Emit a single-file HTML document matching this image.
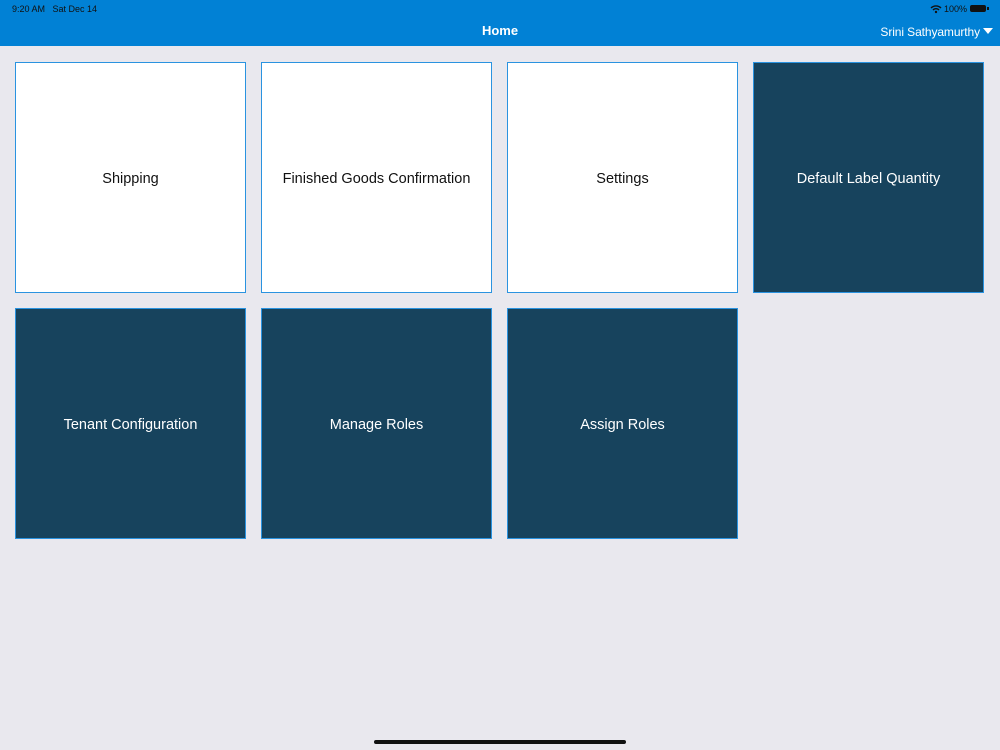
<!DOCTYPE html>
<html><head><style>
body{margin:0;width:1000px;height:750px;background:#e9e8ee;font-family:"Liberation Sans",sans-serif;position:relative;overflow:hidden}
.hdr{position:absolute;left:0;top:0;width:1000px;height:46px;background:#0181d5}
.t{position:absolute;font-size:9px;color:#111}
.tile{position:absolute;width:229px;height:227px;padding-top:2px;border:1px solid #2a93e0;display:flex;align-items:center;justify-content:center;font-size:14.5px;box-sizing:content-box}
.w{background:#fff;color:#111}
.d{background:#17435d;color:#fff}
</style></head><body>
<div class="hdr">
<div class="t" style="left:12px;top:4px">9:20 AM&nbsp;&nbsp;&nbsp;Sat Dec 14</div>
<svg style="position:absolute;left:930px;top:4px" width="12" height="10" viewBox="0 0 12 10"><path d="M1 4a7 7 0 0 1 10 0M3 6a4 4 0 0 1 6 0" stroke="#111" stroke-width="1.4" fill="none"/><circle cx="6" cy="8" r="1.2" fill="#111"/></svg>
<div class="t" style="left:944px;top:4px">100%</div>
<div style="position:absolute;left:970px;top:5px;width:16px;height:7px;background:#111;border-radius:2px"></div>
<div style="position:absolute;left:987px;top:7px;width:1.5px;height:3px;background:#111"></div>
<div style="position:absolute;left:0;width:1000px;top:23px;text-align:center;color:#fff;font-size:13px;font-weight:bold">Home</div>
<div style="position:absolute;right:20px;top:25px;color:#fff;font-size:12px;letter-spacing:-0.1px">Srini Sathyamurthy</div>
<div style="position:absolute;left:983px;top:28px;width:0;height:0;border-left:5px solid transparent;border-right:5px solid transparent;border-top:6px solid #fff"></div>
</div>
<div class="tile w" style="left:15px;top:62px">Shipping</div>
<div class="tile w" style="left:261px;top:62px">Finished Goods Confirmation</div>
<div class="tile w" style="left:507px;top:62px">Settings</div>
<div class="tile d" style="left:753px;top:62px">Default Label Quantity</div>
<div class="tile d" style="left:15px;top:308px">Tenant Configuration</div>
<div class="tile d" style="left:261px;top:308px">Manage Roles</div>
<div class="tile d" style="left:507px;top:308px">Assign Roles</div>
<div style="position:absolute;left:374px;top:740px;width:252px;height:4px;border-radius:2px;background:#111"></div>
</body></html>
